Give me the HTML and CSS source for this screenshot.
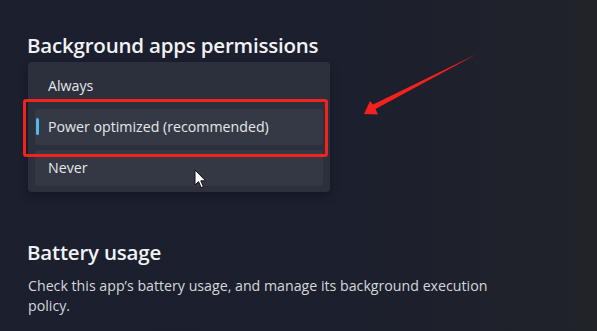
FILE: index.html
```html
<!DOCTYPE html>
<html>
<head>
<meta charset="utf-8">
<link rel="stylesheet" href="styles.css">
</head>
<body>
<div class="page">
  <h2 class="title">Background apps permissions</h2>
  <div class="flyout">
    <div class="opt">Always</div>
    <div class="opt sel"><span class="pill"></span>Power optimized (recommended)</div>
    <div class="opt hover">Never</div>
    <div class="annot"></div>
    <svg class="cursor" width="14" height="21" viewBox="0 0 14 21"><path d="M1 1 L1 16 L4.5 12.6 L7.2 18.6 L9.4 17.6 L6.8 11.8 L11.6 11.8 Z" fill="#fff" stroke="#111" stroke-width="1"/></svg>
  </div>
  <h2 class="title battery">Battery usage</h2>
  <p class="desc">Check this app’s battery usage, and manage its background execution policy.</p>
</div>
<svg class="arrow" width="597" height="331" viewBox="0 0 597 331"><path d="M477 54 L373 104.5 L370 101 L364 114 L378 114.5 L375.5 109 Z" fill="#f5211c"/></svg>
</body>
</html>
```
FILE: styles.css
```css
html, body {
  margin: 0;
  padding: 0;
  width: 597px;
  height: 331px;
  overflow: hidden;
}
body {
  background: linear-gradient(90deg, #1b1f2e 0%, #1c1f2d 60%, #212329 100%);
  font-family: "Open Sans", "Noto Sans", sans-serif;
  position: relative;
}
.page {
  padding: 32px 0 0 27px;
}
.title {
  margin: 0;
  font-size: 20.5px;
  line-height: 26px;
  font-weight: 600;
  color: #f2f2f4;
  letter-spacing: -0.2px;
}
.flyout {
  position: relative;
  margin: 4px 0 0 1px;
  width: 302px;
  padding: 6px 7px;
  box-sizing: border-box;
  background: #2c303c;
  border-radius: 4px;
  display: flex;
  flex-direction: column;
  gap: 5px;
  box-shadow: 0 4px 10px rgba(0,0,0,0.25);
}
.opt {
  position: relative;
  height: 36px;
  box-sizing: border-box;
  padding: 0 0 2px 13px;
  display: flex;
  align-items: center;
  font-size: 14.2px;
  color: #e6e7ea;
  border-radius: 4px;
}
.opt.sel {
  background: #353945;
}
.opt.hover {
  background: #343844;
}
.pill {
  position: absolute;
  left: 1px;
  top: 9px;
  width: 3px;
  height: 17px;
  border-radius: 2px;
  background: #4fb8ef;
}
.annot {
  position: absolute;
  left: -5px;
  top: 37px;
  width: 299px;
  height: 52px;
  border: 3px solid #f2221d;
  border-radius: 3px;
}
.cursor {
  position: absolute;
  left: 166px;
  top: 107px;
}
.battery {
  margin-top: 47px;
}
.desc {
  margin: 11px 0 0 1px;
  width: 482px;
  font-size: 14.2px;
  line-height: 20px;
  color: #d6d7dc;
}
.arrow {
  position: absolute;
  left: 0;
  top: 0;
}
```
